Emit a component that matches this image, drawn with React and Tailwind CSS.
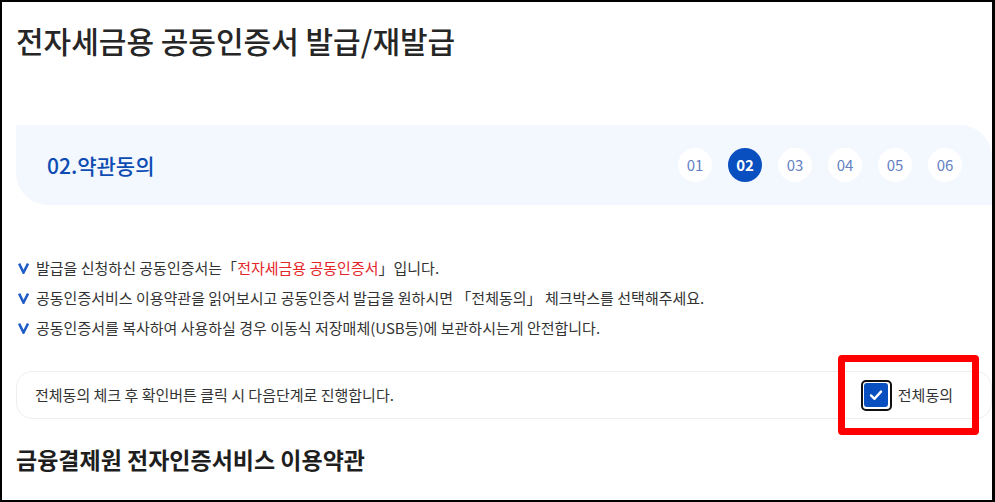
import React from "react";

const font = { fontFamily: '"Noto Sans CJK KR", "Noto Sans", sans-serif' };

function Check() {
  return (
    <svg width="11" height="12" viewBox="0 0 11 12" className="shrink-0">
      <path d="M1.1 1.6 L5.5 10.6 L10 1.6" fill="none" stroke="#1f5cc7" strokeWidth="2.5" strokeLinejoin="miter" />
    </svg>
  );
}

export default function App() {
  const steps = ["01", "02", "03", "04", "05", "06"];
  return (
    <div
      className="relative w-[995px] h-[502px] overflow-hidden bg-white border-black border-t-2 border-l-2 border-b-2 border-r-[3px]"
      style={font}
    >
      <div className="pl-[14px]">
        <h1 className="pt-[18px] text-[30px] leading-[40px] font-medium text-[#262626]">
          전자세금용 공동인증서 발급/재발급
        </h1>

        <div className="mt-[65px] h-[80px] bg-[#f3f7fe] rounded-tr-[32px] rounded-bl-[32px] flex items-center justify-between pl-[31px] pr-[30px]">
          <div className="text-[21px] font-medium text-[#0d4cb3] leading-none">02.약관동의</div>
          <div className="flex gap-[16px]">
            {steps.map((s) =>
              s === "02" ? (
                <div
                  key={s}
                  className="w-[34px] h-[34px] rounded-full bg-[#0a4fbf] text-white text-[15px] font-semibold flex items-center justify-center"
                >
                  {s}
                </div>
              ) : (
                <div
                  key={s}
                  className="w-[34px] h-[34px] rounded-full bg-white text-[#6381c3] text-[15px] flex items-center justify-center"
                >
                  {s}
                </div>
              )
            )}
          </div>
        </div>

        <ul className="mt-[48px] text-[15px] text-[#333] leading-[30px]">
          <li className="flex items-center gap-[7px] pl-[2px]">
            <Check />
            <span>
              발급을 신청하신 공동인증서는「<span className="text-[#e4252a]">전자세금용 공동인증서</span>」입니다.
            </span>
          </li>
          <li className="flex items-center gap-[7px] pl-[2px]">
            <Check />
            <span>공동인증서비스 이용약관을 읽어보시고 공동인증서 발급을 원하시면 「전체동의」 체크박스를 선택해주세요.</span>
          </li>
          <li className="flex items-center gap-[7px] pl-[2px]">
            <Check />
            <span>공동인증서를 복사하여 사용하실 경우 이동식 저장매체(USB등)에 보관하시는게 안전합니다.</span>
          </li>
        </ul>

        <div className="mt-[28px] h-[48px] border border-[#eeeeee] rounded-[16px] flex items-center justify-between pl-[18px] pr-[38px]">
          <span className="text-[15px] text-[#333]">전체동의 체크 후 확인버튼 클릭 시 다음단계로 진행합니다.</span>
          <label className="flex items-center gap-[6px] text-[15px] text-[#333]">
            <span className="w-[31px] h-[31px] rounded-[5px] border-[2.5px] border-[#111] bg-white p-[1.5px] flex">
              <span className="flex-1 rounded-[3px] bg-[#0a4fbf] flex items-center justify-center">
                <svg width="16" height="16" viewBox="0 0 16 16">
                  <path d="M3 8.4 L6.5 11.8 L13 4.6" fill="none" stroke="white" strokeWidth="2.4" strokeLinecap="round" strokeLinejoin="round" />
                </svg>
              </span>
            </span>
            전체동의
          </label>
        </div>

        <h2 className="mt-[24px] text-[23px] leading-[32px] font-semibold text-[#1e1e1e]">
          금융결제원 전자인증서비스 이용약관
        </h2>
      </div>

      <div className="absolute left-[836px] top-[353px] w-[141px] h-[80px] border-[7px] border-[#ff0000] rounded-[4px]" />
    </div>
  );
}
